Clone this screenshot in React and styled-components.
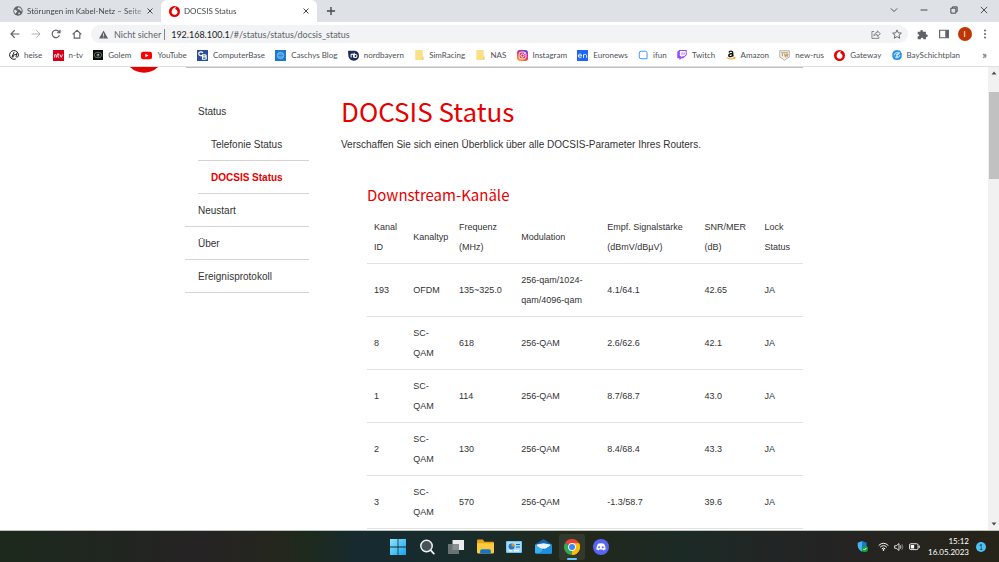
import * as React from 'react';
import styled, { createGlobalStyle, css } from 'styled-components';

const GlobalStyle = createGlobalStyle`
  * {
    box-sizing: border-box;
  }

  body {
    margin: 0;
    background-color: #fff;
    font-family: 'Liberation Sans', Arial, sans-serif;
  }

  button {
    display: inline-flex;
    align-items: center;
    justify-content: center;
    padding: 0;
    border: 0;
    background: none;
    color: inherit;
    font: inherit;
  }

  a {
    color: inherit;
    text-decoration: none;
  }

  svg {
    display: block;
    flex: none;
  }
`;

const uiFont = css`
  font-family: Lato, 'Open Sans', sans-serif;
`;

const headingFont = css`
  font-family: 'Noto Sans CJK SC', 'Noto Sans', sans-serif;
`;

const Screen = styled.div`
  display: flex;
  flex-direction: column;
  height: 100vh;
  overflow: hidden;
`;

/* browser chrome */

const TabStrip = styled.div`
  ${uiFont}
  display: flex;
  flex: none;
  height: 22px;
  padding-left: 3px;
  background-color: #dee1e6;
  color: #45494d;
  font-size: 8px;
`;

const Tab = styled.div`
  display: flex;
  align-items: center;
  gap: 4px;
  width: ${({ $active }) => ($active ? '156px' : '158px')};
  padding: 0 7px 0 ${({ $active }) => ($active ? '8px' : '10px')};
  border-radius: 6px 6px 0 0;
  background-color: ${({ $active }) => ($active ? '#fff' : 'transparent')};
`;

const TabTitle = styled.span`
  flex: 1;
  white-space: nowrap;
  mask-image: linear-gradient(to right, #000 85%, transparent 110%);
`;

const IconButton = styled.button`
  flex: none;
  width: ${({ $width }) => $width || 10}px;
  height: ${({ $height }) => $height || 22}px;
`;

const NewTab = styled(IconButton)`
  margin-left: 9px;
`;

const WindowButtons = styled.div`
  display: flex;
  margin-left: auto;
`;

const Toolbar = styled.div`
  ${uiFont}
  display: flex;
  flex: none;
  align-items: center;
  height: 24px;
  padding: 0 4px;
  color: #5f6368;
`;

const AddressBar = styled.div`
  display: flex;
  flex: 1;
  align-items: center;
  height: 18px;
  margin: 0 4px;
  padding: 0 1px 0 8px;
  border-radius: 9px;
  background-color: #f1f3f4;
  font-size: 9px;
  white-space: nowrap;
`;

const Warning = styled.span`
  display: flex;
  align-items: center;
  gap: 6px;
  margin-right: 6px;
  padding-right: 3px;
  border-right: 1px solid #80868b;
  line-height: 11px;
`;

const Host = styled.label`
  color: #202124;
`;

const PathInput = styled.input`
  flex: 1;
  min-width: 0;
  padding: 0;
  border: 0;
  outline: 0;
  background: none;
  color: #5f6368;
  font: inherit;
`;

const Avatar = styled.span`
  display: flex;
  align-items: center;
  justify-content: center;
  width: 14px;
  height: 14px;
  border-radius: 50%;
  background-color: #bf3604;
  color: #fff;
  font-size: 8px;
`;

const BookmarkBar = styled.nav`
  ${uiFont}
  display: flex;
  flex: none;
  align-items: center;
  justify-content: space-between;
  height: 21px;
  padding: 0 12px 2px 9px;
  border-bottom: 1px solid #dcdee0;
  color: #4d5156;
  font-size: 8px;
  white-space: nowrap;
`;

const Bookmark = styled.a`
  display: flex;
  align-items: center;
  gap: 5px;
`;

const MoreBookmarks = styled.button`
  margin-left: 12px;
  font-size: 11px;
  line-height: 12px;
`;

/* router page */

const Viewport = styled.div`
  display: flex;
  flex: 1;
  min-height: 0;
`;

const Page = styled.div`
  flex: 1;
  min-width: 0;
  overflow: hidden;
  color: #333;
`;

const Masthead = styled.header`
  display: flex;
  align-items: flex-start;
  max-width: 728px;
  margin: 0 auto;
  padding-right: 55px;
`;

const MastheadRule = styled.div`
  flex: 1;
  height: 1px;
  margin-left: 28px;
  background-color: #bebebe;
`;

const Columns = styled.div`
  display: flex;
  gap: 32px;
  max-width: 618px;
  margin: 0 auto;
  padding-top: 22px;
`;

const SideNav = styled.nav`
  flex: none;
  width: 124px;
  font-size: 10px;
`;

const NavList = styled.ul`
  margin: 0;
  padding: 0 0 0 ${({ $nested }) => ($nested ? '13px' : '0')};
  list-style: none;
`;

const NavLink = styled.a`
  display: block;
  height: 33px;
  padding-left: 13px;
  border-bottom: 1px solid ${({ $plain }) => ($plain ? 'transparent' : '#d4d4d4')};
  color: ${({ $current }) => ($current ? '#e60000' : '#333')};
  font-weight: ${({ $current }) => ($current ? 'bold' : 'normal')};
  line-height: 34px;
`;

const Content = styled.main`
  flex: 1;
  min-width: 0;
`;

const Title = styled.h1`
  ${headingFont}
  margin: 0;
  color: #e60000;
  font-size: 26px;
  font-weight: 400;
  line-height: 32px;
`;

const Intro = styled.p`
  margin: 10px 0 0;
  font-size: 10px;
  line-height: 16px;
`;

const Section = styled.section`
  margin-top: 30px;
  padding-left: 26px;
`;

const SectionTitle = styled.h2`
  ${headingFont}
  margin: 0 0 4px;
  color: #e60000;
  font-size: 15px;
  font-weight: 400;
  line-height: 24px;
`;

const Table = styled.table`
  width: 100%;
  border-collapse: collapse;
  table-layout: fixed;
  font-size: 9px;
  line-height: 20px;
`;

const cell = css`
  padding: 6px 0 6px 7px;
  border-bottom: 1px solid #e2e2e2;
  font-weight: normal;
  text-align: left;
  vertical-align: middle;
`;

const HeadCell = styled.th`
  ${cell}
  width: ${({ $width }) => $width};
`;

const Cell = styled.td`
  ${cell}
  padding-right: ${({ $tight }) => ($tight ? '16px' : '0')};
`;

const ScrollTrack = styled.div`
  display: flex;
  flex: none;
  flex-direction: column;
  width: 11px;
  padding-left: 1px;
  background-color: #f1f1f1;
  color: #505050;
`;

const ScrollArea = styled.div`
  flex: 1;
  padding-top: 13px;
`;

const ScrollThumb = styled.div`
  height: 20%;
  min-height: 87px;
  background-color: #c1c1c1;
`;

/* windows taskbar */

const Taskbar = styled.footer`
  ${uiFont}
  display: grid;
  flex: none;
  grid-template-columns: 1fr auto 1fr;
  align-items: center;
  height: 32px;
  border-top: 1px solid #b9c4b9;
  background: linear-gradient(
    to right,
    #1d291c 0%,
    #202520 12%,
    #262324 20%,
    #25261e 27%,
    #1e2a1e 31%,
    #172a30 36%,
    #182c2c 46%,
    #22281a 58%,
    #1c2a26 68%,
    #242324 82%,
    #262418 100%
  );
  color: #fff;
`;

const Apps = styled.div`
  display: flex;
  grid-column: 2;
  gap: 3px;
`;

const AppButton = styled.button`
  position: relative;
  width: 26px;
  height: 26px;
  border-radius: 3px;

  ${({ $open }) =>
    $open &&
    css`
      background-color: rgba(255, 255, 255, 0.08);

      &::after {
        content: '';
        position: absolute;
        bottom: 0;
        left: 8px;
        right: 8px;
        height: 2px;
        border-radius: 1px;
        background-color: #62c8f2;
      }
    `}
`;

const Tray = styled.div`
  display: flex;
  align-items: center;
  justify-content: flex-end;
  gap: 5px;
  padding-right: 13px;
`;

const TrayStatus = styled.div`
  display: flex;
  align-items: center;
  gap: 5px;
  margin-left: 5px;
`;

const Clock = styled.time`
  margin: 0 2px 0 3px;
  font-size: 8px;
  line-height: 11px;
  text-align: right;
`;

const Notifications = styled.span`
  display: flex;
  align-items: center;
  justify-content: center;
  width: 10px;
  height: 10px;
  border-radius: 50%;
  background-color: #4cc2f5;
  color: #10303c;
  font-size: 7px;
`;

/* icons */

const Icon = ({ size = 10, box = 16, children, ...rest }) => (
  <svg
    width={size}
    height={size}
    viewBox={`0 0 ${box} ${box}`}
    fill="none"
    aria-hidden="true"
    {...rest}
  >
    {children}
  </svg>
);

const Stroke = ({ d, width = 1.6, size, ...rest }) => (
  <Icon size={size}>
    <path d={d} stroke="currentColor" strokeWidth={width} {...rest} />
  </Icon>
);

const CloseIcon = () => <Stroke size={8} width={2} d="M3 3l10 10M13 3L3 13" />;

const Vodafone = () => (
  <Icon size={11}>
    <circle cx="8" cy="8" r="8" fill="#e60000" />
    <path
      d="M9.500 1.800C6.500 2.300 3.800 5 3.800 8.500c0 2.600 1.900 4.400 4.300 4.400s4.300-1.800 4.300-4.200c0-2.200-1.500-3.500-3.400-4 0-1.300.4-2.100 1.400-2.700z"
      fill="#fff"
    />
  </Icon>
);

const Globe = () => (
  <Icon>
    <circle cx="8" cy="8" r="7.500" fill="#5f6368" />
    <path
      d="M2 6c2-.2 3 .6 4 1.500 1.200 1 .4 2-.6 2.300-.6 1-.8 2-1.400 2.600C2.300 11 1.600 8.500 2 6zM8 1.900c.4 1.600-.8 2-1.400 2.800 1.200 1 3 .2 4 1 .8 1 .4 1.700 1.800 2 .8.300 1.200.9 1.200 1.500 1.300-3-1.200-7-5.600-7.300zM9 10.500c1.500-.3 2.500.3 2.600 1.600L9 13.600c-.6-1-.7-2 0-3.100z"
      fill="#e4e6ea"
    />
  </Icon>
);

const Heise = () => (
  <Icon>
    <path
      d="M11 14.200A7 7 0 1 1 15 8c0 2.600-1.400 3.800-2.600 3.600-1.200-.2-1-1.500-.8-2.300l1-4.800M8 3.500L4.500 12M11 7.500c-1.800-1-3.700.2-5 4.500"
      stroke="#1a1a1a"
      strokeWidth="1.600"
    />
  </Icon>
);

const Ntv = () => (
  <Icon size={11}>
    <path fill="#d5001c" d="M0 0h16v16H0z" />
    <path
      d="M2.500 11V6.500M2.500 7.500c1-1.300 2.500-1 2.500.5v3M7.300 4.500V10c0 .8.800 1 1.500.8M6 6.700h3M10 6.500l2 4.200 2-4.200"
      stroke="#fff"
      strokeWidth="1.300"
    />
  </Icon>
);

const Golem = () => (
  <Icon>
    <path fill="#0c0c0c" d="M0 0h16v16H0z" />
    <ellipse cx="8" cy="8" rx="6" ry="4.500" stroke="#7f8f7c" strokeWidth="1.200" />
    <circle cx="8" cy="8" r="2.600" fill="#5d7a60" />
    <circle cx="8.500" cy="7.300" r="1" fill="#e8f0e6" />
  </Icon>
);

const YouTube = () => (
  <Icon size={11}>
    <rect y="2.500" width="16" height="11" rx="3" fill="#f00" />
    <path d="M6.300 5.500v5L11 8z" fill="#fff" />
  </Icon>
);

const ComputerBase = () => (
  <Icon size={11}>
    <path fill="#2a5093" d="M0 0h16v16H0z" />
    <path
      d="M8.500 4.200C7.500 2 2.500 2 2.500 5.500c0 3.200 4 3.500 5.500 2M8 7v6.500h3.500c2.800 0 2.800-3.200.5-3.400 2-.4 1.800-3.100-.5-3.100zM8 10h4"
      stroke="#fff"
      strokeWidth="1.700"
    />
  </Icon>
);

const Caschys = () => (
  <Icon size={11}>
    <path fill="#2076c8" d="M0 0h16v16H0z" />
    <circle cx="8" cy="8" r="4.800" fill="#4ba3e8" stroke="#83bff0" strokeWidth="1" />
    <path d="M5 8h6" stroke="#2d80cd" strokeWidth="1.200" />
  </Icon>
);

const Nordbayern = () => (
  <Icon size={11}>
    <path d="M0 1h9a7 7 0 0 1 7 7 7 7 0 0 1-7.500 7.500C4 15.500.500 12 .5 8z" fill="#1c2c5c" />
    <path
      d="M4.500 11V6.500c2-1.200 3.500 0 3.500 1.500v3M9 4v6.500c2.800 1.200 4-.5 4-2s-1.500-2.800-4-1.500"
      stroke="#fff"
      strokeWidth="1.500"
    />
  </Icon>
);

const Folder = () => (
  <Icon>
    <path d="M2 0h12v11h1v4l-2 1H2z" fill="#fbe08a" />
    <path d="M14 10.500h1V15l-2 1z" fill="#e9c65a" />
  </Icon>
);

const Instagram = () => (
  <Icon size={11}>
    <defs>
      <linearGradient id="insta" x1="0.200" y1="1" x2="0.800" y2="0">
        <stop offset="0" stopColor="#fdb540" />
        <stop offset="0.350" stopColor="#f4473a" />
        <stop offset="0.650" stopColor="#c92a9b" />
        <stop offset="1" stopColor="#5b4fd8" />
      </linearGradient>
    </defs>
    <rect width="16" height="16" rx="4" fill="url(#insta)" />
    <rect x="3" y="3" width="10" height="10" rx="3" stroke="#fff" strokeWidth="1.300" />
    <circle cx="8" cy="8" r="2.300" stroke="#fff" strokeWidth="1.300" />
    <circle cx="11" cy="5" r=".8" fill="#fff" />
  </Icon>
);

const Euronews = () => (
  <Icon size={11}>
    <path fill="#1f66f2" d="M0 0h16v16H0z" />
    <path
      d="M2 8.500h4.700C6.700 5 2 5 2 8.500c0 3 3 3.300 4.500 1.800M9.500 11.500V6.300M9.500 8c1-2.200 4.500-2.200 4.500.5v3"
      stroke="#fff"
      strokeWidth="1.300"
    />
  </Icon>
);

const Ifun = () => (
  <Icon>
    <path
      d="M5 2h7a2.500 2.500 0 0 1 2.500 2.500V14H5a3 3 0 0 1-3-3V5a3 3 0 0 1 3-3z"
      stroke="#3f9af0"
      strokeWidth="1.600"
    />
  </Icon>
);

const Twitch = () => (
  <Icon>
    <path d="M3.500 0L.5 3v10h3.500v3l3-3h3l5.500-5V0z" fill="#9146ff" />
    <path d="M4.500 1.400h9.500v6L11.500 9.800H9l-2 2v-2H4.500z" fill="#fff" />
    <path d="M8 4v3.500M11.300 4v3.500" stroke="#9146ff" strokeWidth="1.400" />
  </Icon>
);

const Amazon = () => (
  <Icon>
    <path
      d="M4.800 4c.8-3 6-2.800 6 .5V8c0 1 .4 1.500 1 2.200M10.500 5.500c-4 0-6 1-6 3.100 0 3 5 2.800 6-.8"
      stroke="#111"
      strokeWidth="2.200"
    />
    <path d="M1 12c4.500 3.300 9.500 3.200 13 .5M12 12h2.600l-.8 2.400" stroke="#f90" strokeWidth="1.500" />
  </Icon>
);

const NewRus = () => (
  <Icon size={11}>
    <path d="M1 1h14v9l-7 5-7-5z" fill="#f2f0ed" stroke="#a8a8a8" strokeWidth="1.200" />
    <path d="M3 4h10M5 5v4M8 5.500l1.200 4 1.300-3 1.200 3L13 5.500" stroke="#c49a62" strokeWidth="1.500" />
  </Icon>
);

const Bay = () => (
  <Icon>
    <path d="M3 1l5-1 5 1 2.500 4v6l-2.500 4-5 1-5-1L.5 11V5z" fill="#2492e6" />
    <path
      d="M3.500 8.500a4.500 4.500 0 0 1 8-2.700M12.500 8a4.500 4.500 0 0 1-8 2.800M6 7h4l-3.500 3H10M11.500 3v3h-3"
      stroke="#fff"
      strokeWidth="1.300"
    />
  </Icon>
);

const WindowsLogo = () => (
  <Icon size={16}>
    <defs>
      <linearGradient id="win" x1="0" y1="0" x2="1" y2="1">
        <stop offset="0" stopColor="#8ce4fd" />
        <stop offset="1" stopColor="#16a4ee" />
      </linearGradient>
    </defs>
    <path d="M0 0h7.600v7.600H0zM8.400 0H16v7.600H8.400zM0 8.400h7.600V16H0zM8.400 8.400H16V16H8.400z" fill="url(#win)" />
  </Icon>
);

const SearchIcon = () => (
  <Icon size={16}>
    <circle cx="7.500" cy="7" r="5.700" fill="#46545a" stroke="#f2f2f2" strokeWidth="1.500" />
    <path d="M11.600 11.200l3.200 3.400" stroke="#f2f2f2" strokeWidth="1.800" strokeLinecap="round" />
  </Icon>
);

const TaskView = () => (
  <Icon size={16}>
    <path d="M4.500 1H16v10H4.500z" fill="#ececec" />
    <path d="M0 5h11v10H0z" fill="#7a7f80" fillOpacity=".85" />
  </Icon>
);

const Explorer = () => (
  <Icon size={17}>
    <path d="M0 2.500q0-1 1-1h4.500l1.500 2h8q1 0 1 1V13H0z" fill="#e8a317" />
    <path d="M0 5h16v8.500q0 1-1 1H1q-1 0-1-1z" fill="#fccb3c" />
    <path d="M3 14.500V12q0-1.500 1.500-1.500h7q1.500 0 1.500 1.500v2.500z" fill="#1774c9" />
  </Icon>
);

const ControlPanel = () => (
  <Icon size={16}>
    <rect y="2" width="16" height="12" rx="1" fill="#70c7f4" />
    <rect x="1" y="3" width="14" height="10" fill="#a7ddfa" />
    <circle cx="5.500" cy="7.500" r="3" fill="#2078cf" />
    <path d="M5.500 7.500v-3a3 3 0 0 1 3 3z" fill="#f28e26" />
    <path d="M10 5.500h4M10 8h4" stroke="#1e67ac" strokeWidth="1.200" />
    <path d="M3 11.700h3M8 11.700h5" stroke="#fff" strokeWidth="1.200" />
  </Icon>
);

const Mail = () => (
  <Icon size={17}>
    <path d="M0 6l8-5 8 5v8.500H0z" fill="#1465b4" />
    <path d="M1.500 6L8 5l6.500 1v4h-13z" fill="#e9f5fc" />
    <path d="M0 6l8 5.500L16 6v7.500q0 1-1 1H1q-1 0-1-1z" fill="#39b2ee" />
    <path d="M16 6v7.500q0 1-1 1H3z" fill="#1c8fdf" />
  </Icon>
);

const Chrome = () => (
  <Icon size={16}>
    <path d="M8 8L1.070 4A8 8 0 0 1 14.930 4z" fill="#ea4335" />
    <path d="M8 8l6.930-4A8 8 0 0 1 8 16z" fill="#fbbc05" />
    <path d="M8 8v8A8 8 0 0 1 1.070 4z" fill="#34a853" />
    <path d="M8 4.200h7A8 8 0 0 1 8 16l3.500-6z" fill="#fbbc05" />
    <circle cx="8" cy="8" r="3.900" fill="#fff" />
    <circle cx="8" cy="8" r="3" fill="#4285f4" />
  </Icon>
);

const Discord = () => (
  <Icon size={16}>
    <circle cx="8" cy="8" r="8" fill="#5865f2" />
    <path
      d="M5 4.700q3-1 6 0 1.700 2.500 1.700 5.500-1.300 1-2.500 1.200l-.6-1q-1.600.4-3.200 0l-.6 1q-1.300-.2-2.500-1.200 0-3 1.700-5.500z"
      fill="#fff"
    />
    <circle cx="6.200" cy="8.200" r="1" fill="#5865f2" />
    <circle cx="9.800" cy="8.200" r="1" fill="#5865f2" />
  </Icon>
);

const Shield = () => (
  <Icon size={11}>
    <path d="M7.500 0l6.500 2.500v4.500c0 4-3 7-6.500 8.500V0z" fill="#1a78d0" />
    <path d="M7.500 0L1 2.500v4.500c0 4 3 7 6.500 8.500V0z" fill="#45b3ef" />
    <circle cx="11.500" cy="11.500" r="4.500" fill="#12a141" />
    <path d="M9.300 11.500l1.500 1.600 2.800-3" stroke="#fff" strokeWidth="1.400" />
  </Icon>
);

const Wifi = () => (
  <Icon size={11} stroke="#fff" strokeWidth="1.400">
    <path d="M1 6.500q7-6.500 14 0M3.200 9q4.800-4.500 9.600 0M5.500 11.300q2.500-2.200 5 0" />
    <circle cx="8" cy="13" r=".8" fill="#fff" />
  </Icon>
);

const Speaker = () => (
  <Icon stroke="#fff" strokeWidth="1.300">
    <path d="M1 6h2.500L8 2.500v11L3.500 10H1z" />
    <path d="M10.300 5.500q1.700 2.500 0 5" />
    <path d="M12.500 3.500q3.500 4.500 0 9" strokeOpacity=".5" />
  </Icon>
);

const Battery = () => (
  <Icon size={11}>
    <rect x=".7" y="4" width="12.500" height="8.500" rx="2" stroke="#fff" strokeWidth="1.300" />
    <path d="M2.500 5.800h5v5h-5zM14.200 6.500h1.300v3.500h-1.300z" fill="#fff" />
  </Icon>
);

const Puzzle = () => (
  <Icon size={11}>
    <path
      d="M1 4h4C4 .5 9 .5 8.500 4H13v4.200c3.500-.7 3.500 4 0 3.500V15H9.200c.3-3-4-3-3.700 0H1v-4c3 .3 3-3.800 0-3.500z"
      fill="#5f6368"
    />
  </Icon>
);

/* data */

const bookmarks = [
  { label: 'heise', icon: Heise },
  { label: 'n-tv', icon: Ntv },
  { label: 'Golem', icon: Golem },
  { label: 'YouTube', icon: YouTube },
  { label: 'ComputerBase', icon: ComputerBase },
  { label: 'Caschys Blog', icon: Caschys },
  { label: 'nordbayern', icon: Nordbayern },
  { label: 'SimRacing', icon: Folder },
  { label: 'NAS', icon: Folder },
  { label: 'Instagram', icon: Instagram },
  { label: 'Euronews', icon: Euronews },
  { label: 'ifun', icon: Ifun },
  { label: 'Twitch', icon: Twitch },
  { label: 'Amazon', icon: Amazon },
  { label: 'new-rus', icon: NewRus },
  { label: 'Gateway', icon: Vodafone },
  { label: 'BaySchichtplan', icon: Bay },
];

const columns = [
  { label: 'Kanal ID', width: '9%' },
  { label: 'Kanaltyp', width: '10.5%' },
  { label: 'Frequenz (MHz)', width: '14.3%' },
  { label: 'Modulation', width: '19.7%' },
  { label: 'Empf. Signalstärke (dBmV/dBµV)', width: '22.3%' },
  { label: 'SNR/MER (dB)', width: '13.8%' },
  { label: 'Lock Status', width: '10.4%' },
];

const channels = [
  ['193', 'OFDM', '135~325.0', '256-qam/1024-qam/4096-qam', '4.1/64.1', '42.65', 'JA'],
  ['8', 'SC-QAM', '618', '256-QAM', '2.6/62.6', '42.1', 'JA'],
  ['1', 'SC-QAM', '114', '256-QAM', '8.7/68.7', '43.0', 'JA'],
  ['2', 'SC-QAM', '130', '256-QAM', '8.4/68.4', '43.3', 'JA'],
  ['3', 'SC-QAM', '570', '256-QAM', '-1.3/58.7', '39.6', 'JA'],
];

const apps = [
  { name: 'Start', icon: WindowsLogo },
  { name: 'Suche', icon: SearchIcon },
  { name: 'Taskansicht', icon: TaskView },
  { name: 'Explorer', icon: Explorer },
  { name: 'Systemsteuerung', icon: ControlPanel },
  { name: 'Mail', icon: Mail },
  { name: 'Chrome', icon: Chrome, open: true },
  { name: 'Discord', icon: Discord },
];

const BrowserTabs = () => (
  <TabStrip>
    <Tab>
      <Globe />
      <TabTitle>Störungen im Kabel-Netz – Seite</TabTitle>
      <IconButton $width={8} aria-label="Tab schließen">
        <CloseIcon />
      </IconButton>
    </Tab>
    <Tab $active>
      <Vodafone />
      <TabTitle>DOCSIS Status</TabTitle>
      <IconButton $width={8} aria-label="Tab schließen">
        <CloseIcon />
      </IconButton>
    </Tab>
    <NewTab aria-label="Neuer Tab">
      <Stroke d="M8 1.500v13M1.500 8h13" width={2.2} />
    </NewTab>
    <WindowButtons>
      <IconButton $width={30} $height={20} aria-label="Tabs suchen">
        <Stroke d="M3 5.500l5 5 5-5" width={1.5} />
      </IconButton>
      <IconButton $width={30} $height={20} aria-label="Minimieren">
        <Stroke d="M2.500 8h11" />
      </IconButton>
      <IconButton $width={30} $height={20} aria-label="Verkleinern">
        <Stroke d="M3 5h8v8H3zM5.500 4.500V3h7.500v7.500h-1.500" strokeLinejoin="round" />
      </IconButton>
      <IconButton $width={30} $height={20} aria-label="Schließen">
        <Stroke d="M3 3l10 10M13 3L3 13" width={1.5} />
      </IconButton>
    </WindowButtons>
  </TabStrip>
);

const BrowserToolbar = () => (
  <Toolbar>
    <IconButton $width={21} aria-label="Zurück">
      <Stroke d="M15 8H2M7.500 2L1.500 8l6 6" width={1.9} />
    </IconButton>
    <IconButton $width={21} aria-label="Vorwärts">
      <Stroke d="M1 8h13M8.500 2l6 6-6 6" width={1.6} strokeOpacity=".5" />
    </IconButton>
    <IconButton $width={20} aria-label="Neu laden">
      <Stroke d="M13.500 10A6 6 0 1 1 12.500 4L14 5.500M14.300 1v5H9.500" width={1.9} />
    </IconButton>
    <IconButton $width={21} aria-label="Startseite">
      <Stroke d="M1 8.500L8 2l7 6.500M3.500 7v7.500h9V7" width={1.8} />
    </IconButton>
    <AddressBar>
      <Warning>
        <Icon size={9}>
          <path d="M8 1l8 14H0z" fill="#5f6368" />
          <path d="M8 6v4.500M8 11.700v1.600" stroke="#f1f3f4" strokeWidth="1.500" />
        </Icon>
        Nicht sicher
      </Warning>
      <Host htmlFor="address">192.168.100.1</Host>
      <PathInput id="address" type="text" defaultValue="/#/status/status/docsis_status" />
      <IconButton $width={21} $height={18} aria-label="Teilen">
        <Stroke
          d="M5 4H1.500v11h11v-3M4.500 11c.3-3.500 2.500-5 5.500-5.200V3l5 4.500-5 4.300V9c-2.500 0-4.200.5-5.500 2z"
          width={1.2}
        />
      </IconButton>
      <IconButton $width={21} $height={18} aria-label="Lesezeichen">
        <Stroke d="M8 1.500l2 4.600 5 .5-3.800 3.300 1.200 4.900L8 12.200l-4.400 2.600 1.200-4.900L1 6.600l5-.5z" width={1.5} />
      </IconButton>
    </AddressBar>
    <IconButton $width={21} aria-label="Erweiterungen">
      <Puzzle />
    </IconButton>
    <IconButton $width={21} aria-label="Seitenleiste">
      <Icon>
        <path d="M1 2h14v12H1z" stroke="#5f6368" strokeWidth="1.800" />
        <path d="M10 2h5v12h-5z" fill="#5f6368" />
      </Icon>
    </IconButton>
    <IconButton $width={21} aria-label="Profil">
      <Avatar>I</Avatar>
    </IconButton>
    <IconButton $width={20} aria-label="Menü">
      <Icon>
        <circle cx="8" cy="2.500" r="1.600" fill="#5f6368" />
        <circle cx="8" cy="8" r="1.600" fill="#5f6368" />
        <circle cx="8" cy="13.500" r="1.600" fill="#5f6368" />
      </Icon>
    </IconButton>
  </Toolbar>
);

const SideMenu = () => (
  <SideNav>
    <NavList>
      <li>
        <NavLink href="#status" $plain>Status</NavLink>
        <NavList $nested>
          <li>
            <NavLink href="#telefonie">Telefonie Status</NavLink>
          </li>
          <li>
            <NavLink href="#docsis" $current>DOCSIS Status</NavLink>
          </li>
        </NavList>
      </li>
      <li>
        <NavLink href="#neustart">Neustart</NavLink>
      </li>
      <li>
        <NavLink href="#ueber">Über</NavLink>
      </li>
      <li>
        <NavLink href="#ereignisse">Ereignisprotokoll</NavLink>
      </li>
    </NavList>
  </SideNav>
);

const ChannelTable = () => (
  <Table>
    <thead>
      <tr>
        {columns.map(({ label, width }) => (
          <HeadCell key={label} scope="col" $width={width}>
            {label}
          </HeadCell>
        ))}
      </tr>
    </thead>
    <tbody>
      {channels.map((channel) => (
        <tr key={channel[0]}>
          {channel.map((value, index) => (
            <Cell key={index} $tight={index === 1 || index === 3}>
              {value}
            </Cell>
          ))}
        </tr>
      ))}
    </tbody>
  </Table>
);

const App = () => (
  <Screen>
    <GlobalStyle />
    <BrowserTabs />
    <BrowserToolbar />
    <BookmarkBar>
      {bookmarks.map(({ label, icon: BookmarkIcon }) => (
        <Bookmark key={label} href="#bookmark">
          <BookmarkIcon />
          {label}
        </Bookmark>
      ))}
      <MoreBookmarks aria-label="Weitere Lesezeichen">»</MoreBookmarks>
    </BookmarkBar>

    <Viewport>
      <Page>
        <Masthead>
          <svg width="28" height="6" viewBox="0 0 28 6" aria-hidden="true">
            <circle cx="14" cy="-13.500" r="19.300" fill="#e60000" />
          </svg>
          <MastheadRule />
        </Masthead>
        <Columns>
          <SideMenu />
          <Content>
            <Title>DOCSIS Status</Title>
            <Intro>
              Verschaffen Sie sich einen Überblick über alle DOCSIS-Parameter Ihres Routers.
            </Intro>
            <Section>
              <SectionTitle>Downstream-Kanäle</SectionTitle>
              <ChannelTable />
            </Section>
          </Content>
        </Columns>
      </Page>
      <ScrollTrack>
        <IconButton $height={12} aria-label="Nach oben">
          <Icon size={8}>
            <path d="M3 11l5-6 5 6z" fill="currentColor" />
          </Icon>
        </IconButton>
        <ScrollArea>
          <ScrollThumb />
        </ScrollArea>
        <IconButton $height={12} aria-label="Nach unten">
          <Icon size={8}>
            <path d="M3 5l5 6 5-6z" fill="currentColor" />
          </Icon>
        </IconButton>
      </ScrollTrack>
    </Viewport>

    <Taskbar>
      <Apps>
        {apps.map(({ name, icon: AppIcon, open }) => (
          <AppButton key={name} aria-label={name} $open={open}>
            <AppIcon />
          </AppButton>
        ))}
      </Apps>
      <Tray>
        <Shield />
        <TrayStatus>
          <Wifi />
          <Speaker />
          <Battery />
        </TrayStatus>
        <Clock dateTime="2023-05-16T15:12">
          15:12
          <br />
          16.05.2023
        </Clock>
        <Notifications>1</Notifications>
      </Tray>
    </Taskbar>
  </Screen>
);

export default App;
